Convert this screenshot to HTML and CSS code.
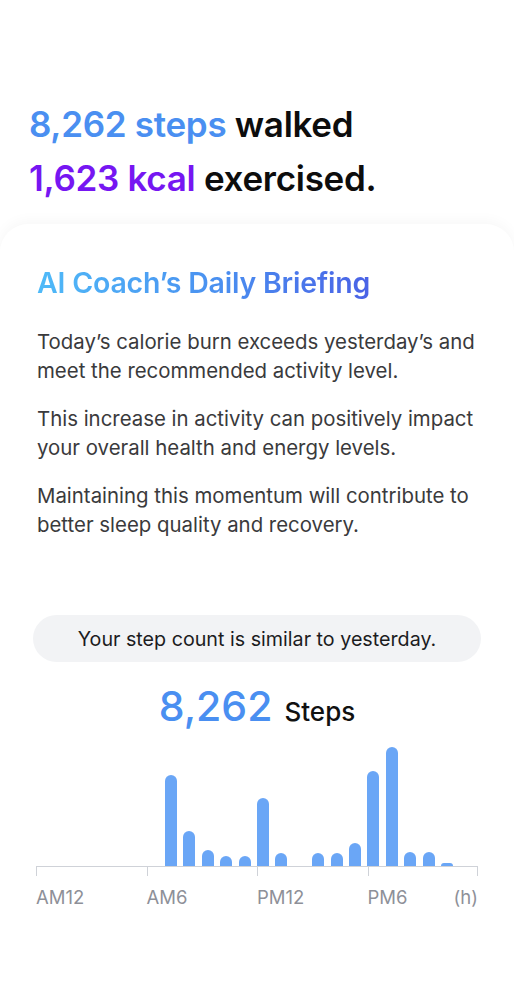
FILE: index.html
```html
<!DOCTYPE html>
<html lang="en">
<head>
<meta charset="utf-8">
<link rel="stylesheet" href="styles.css">
</head>
<body>
<header class="hero">
  <div class="hero-line"><span class="c-blue">8,262 steps</span> walked</div>
  <div class="hero-line"><span class="c-purple">1,623 kcal</span> exercised.</div>
</header>
<section class="card">
  <h2 class="title">AI Coach’s Daily Briefing</h2>
  <p class="para">Today’s calorie burn exceeds yesterday’s and meet the recommended activity level.</p>
  <p class="para">This increase in activity can positively impact your overall health and energy levels.</p>
  <p class="para">Maintaining this momentum will contribute to better sleep quality and recovery.</p>

  <div class="pill">Your step count is similar to yesterday.</div>

  <div class="total"><span class="total-num">8,262</span><span class="total-unit">Steps</span></div>

  <div class="chart">
    <div class="bars">
      <div class="slot"></div><div class="slot"></div><div class="slot"></div><div class="slot"></div>
      <div class="slot"></div><div class="slot"></div><div class="slot"></div>
      <div class="slot"><div class="bar" style="height:91px"></div></div>
      <div class="slot"><div class="bar" style="height:35px"></div></div>
      <div class="slot"><div class="bar" style="height:16px"></div></div>
      <div class="slot"><div class="bar" style="height:10px"></div></div>
      <div class="slot"><div class="bar" style="height:10px"></div></div>
      <div class="slot"><div class="bar" style="height:68px"></div></div>
      <div class="slot"><div class="bar" style="height:13px"></div></div>
      <div class="slot"></div>
      <div class="slot"><div class="bar" style="height:13px"></div></div>
      <div class="slot"><div class="bar" style="height:13px"></div></div>
      <div class="slot"><div class="bar" style="height:23px"></div></div>
      <div class="slot"><div class="bar" style="height:95px"></div></div>
      <div class="slot"><div class="bar" style="height:119px"></div></div>
      <div class="slot"><div class="bar" style="height:14px"></div></div>
      <div class="slot"><div class="bar" style="height:14px"></div></div>
      <div class="slot"><div class="bar bar-tiny" style="height:3px"></div></div>
      <div class="slot"></div>
    </div>
    <div class="ticks">
      <div class="tick"></div><div class="tick"></div><div class="tick"></div><div class="tick tick-end"></div>
    </div>
    <div class="labels">
      <span class="lbl">AM12</span>
      <span class="lbl">AM6</span>
      <span class="lbl">PM12</span>
      <span class="lbl lbl-last"><span>PM6</span><span>(h)</span></span>
    </div>
  </div>
</section>
</body>
</html>
```
FILE: styles.css
```css
html, body {
  margin: 0;
  padding: 0;
  background: #ffffff;
}
body {
  font-family: Inter, "Noto Sans", "Liberation Sans", sans-serif;
  color: #111111;
  width: 514px;
  min-height: 1005px;
  overflow: hidden;
}
.hero {
  padding: 97px 0 19px 29px;
}
.hero-line {
  font-size: 35px;
  font-weight: 600;
  line-height: 54px;
  letter-spacing: -0.3px;
  color: #0d0d0d;
}
.c-blue { color: #4a8ff1; }
.c-purple { color: #7616f2; }

.card {
  background: #ffffff;
  border-radius: 28px 28px 0 0;
  box-shadow: 0 -3px 14px rgba(0, 0, 0, 0.035);
  padding: 43px 37px 80px 37px;
  min-height: 700px;
}
.title {
  margin: 0 0 28px 0;
  font-size: 28.5px;
  line-height: 32px;
  font-weight: 600;
  letter-spacing: -0.2px;
  background: linear-gradient(90deg, #4fbaf8 0%, #4a8ff0 55%, #4a62e6 100%);
  -webkit-background-clip: text;
  background-clip: text;
  color: transparent;
  display: inline-block;
}
.para {
  margin: 0 0 19px 0;
  font-size: 20.4px;
  line-height: 29px;
  color: #3a3a3c;
}
.pill {
  margin: 76px -4px 0 -4px;
  height: 47px;
  border-radius: 24px;
  background: #f2f3f5;
  display: flex;
  align-items: center;
  justify-content: center;
  font-size: 19.7px;
  color: #1c1c1e;
}
.total {
  display: flex;
  justify-content: center;
  align-items: baseline;
  gap: 12px;
  margin-top: 20px;
  line-height: 48px;
}
.total-num {
  font-size: 41px;
  font-weight: 500;
  color: #4a8ff1;
}
.total-unit {
  font-size: 26px;
  font-weight: 500;
  color: #111111;
}
.chart {
  width: 442px;
  margin: 5px 0 0 -1px;
}
.bars {
  display: grid;
  grid-template-columns: repeat(24, 1fr);
  height: 125px;
  align-items: end;
  border-bottom: 1.5px solid #cfd2d8;
}
.slot {
  display: flex;
  align-items: flex-end;
  height: 100%;
}
.bar {
  width: 12px;
  background: #6aa6f6;
  border-radius: 6px 6px 0 0;
}
.bar-tiny {
  border-radius: 3px 3px 0 0;
}
.ticks {
  display: grid;
  grid-template-columns: repeat(4, 1fr);
  height: 9px;
}
.tick {
  border-left: 1.5px solid #cfd2d8;
}
.tick-end {
  border-right: 1.5px solid #cfd2d8;
}
.labels {
  display: grid;
  grid-template-columns: repeat(4, 1fr);
  margin-top: 10px;
  font-size: 18.5px;
  line-height: 22px;
  color: #8e9098;
}
.lbl-last {
  display: flex;
  justify-content: space-between;
}
```
